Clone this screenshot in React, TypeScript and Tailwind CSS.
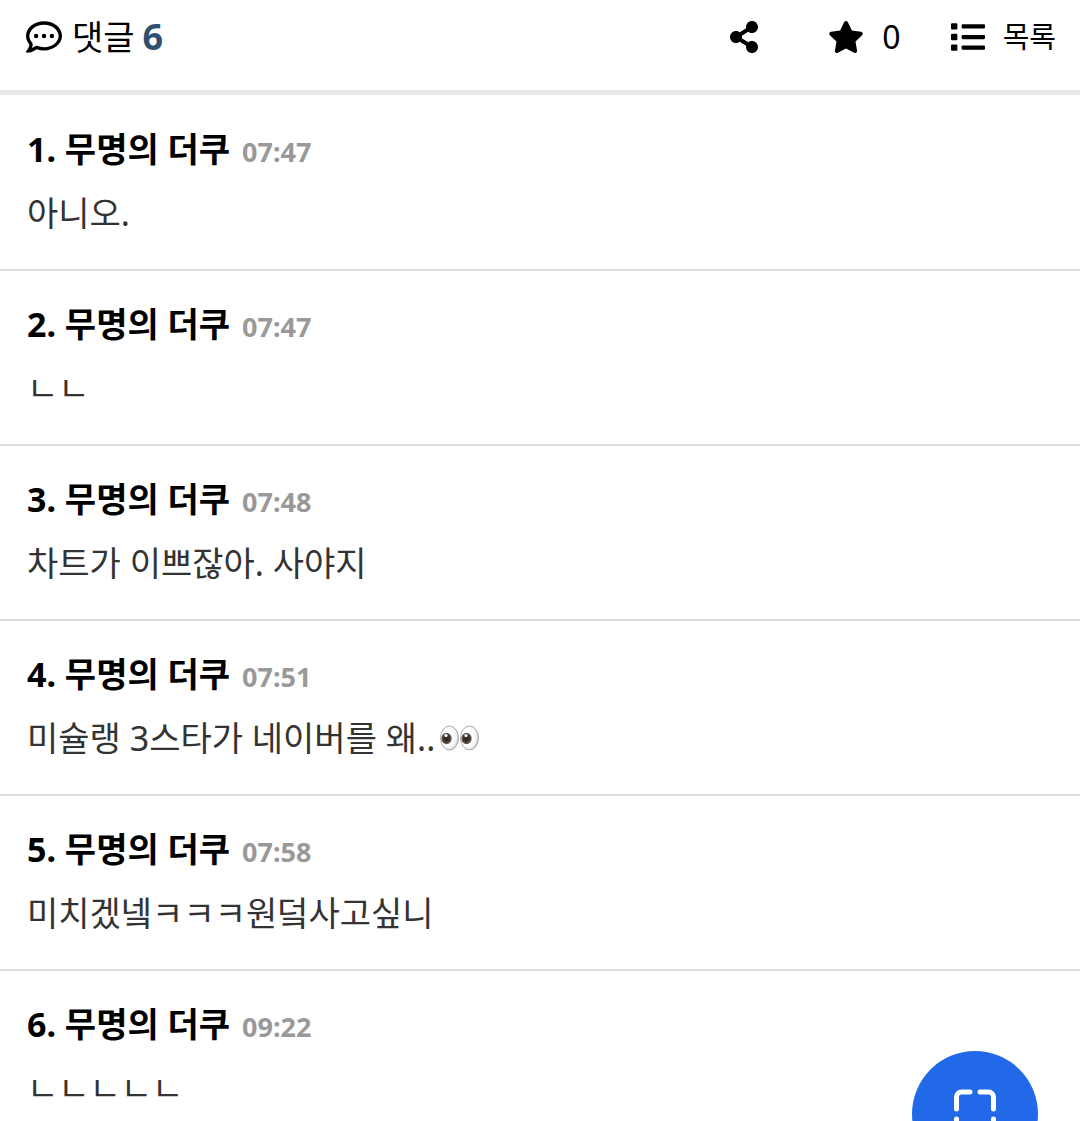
import { FaList, FaShareAlt, FaStar } from "react-icons/fa";
import { FaRegCommentDots } from "react-icons/fa6";

type Comment = {
  id: number;
  time: string;
  text: string;
  eyes?: boolean;
};

const AUTHOR = "무명의 더쿠";

const COMMENTS: Comment[] = [
  { id: 1, time: "07:47", text: "아니오." },
  { id: 2, time: "07:47", text: "ㄴㄴ" },
  { id: 3, time: "07:48", text: "차트가 이쁘잖아. 사야지" },
  { id: 4, time: "07:51", text: "미슐랭 3스타가 네이버를 왜..", eyes: true },
  { id: 5, time: "07:58", text: "미치겠넼ㅋㅋㅋ원덬사고싶니" },
  { id: 6, time: "09:22", text: "ㄴㄴㄴㄴㄴ" },
];

export default function App() {
  return (
    <div className="min-h-screen overflow-hidden bg-white text-black font-['Noto_Sans','Noto_Sans_CJK_KR',sans-serif]">
      <header className="flex items-start justify-between border-b-[5px] border-[#e8e8e8] pt-3 pr-6 pb-7 pl-[26px]">
        <h2 className="flex h-[50px] items-center text-[34px] leading-[50px]">
          <FaRegCommentDots className="mr-2.5 size-9" />
          댓글
          <strong className="ml-2 text-[36px] text-[#2f4f6f]">6</strong>
        </h2>
        <div className="flex h-[50px] items-center leading-[50px]">
          <button type="button" aria-label="공유" className="mr-[70px]">
            <FaShareAlt className="h-8 w-7" />
          </button>
          <button type="button" className="mr-[50px] flex items-center gap-[18px] text-[32px]">
            <FaStar className="h-8 w-9" />
            0
          </button>
          <a href="#list" className="flex items-center gap-[18px] text-[29px]">
            <FaList className="size-[34px]" />
            목록
          </a>
        </div>
      </header>

      <ul className="pt-px">
        {COMMENTS.map((c) => (
          <CommentRow key={c.id} comment={c} />
        ))}
      </ul>

      <button
        type="button"
        aria-label="화면 캡처"
        className="fixed -bottom-14 right-[42px] grid size-[126px] place-items-center rounded-full bg-[#2169e8] text-white"
      >
        <CaptureIcon />
      </button>
    </div>
  );
}

function CommentRow({ comment }: { comment: Comment }) {
  return (
    <li className="border-b-2 border-[#dddddd] px-[27px] pt-7 pb-[31px]">
      <div className="flex items-baseline gap-3 font-bold">
        <span className="text-[34px] leading-[50px]">
          {comment.id}. {AUTHOR}
        </span>
        <time className="text-[27px] leading-[50px] text-[#999999]">{comment.time}</time>
      </div>
      <p className="mt-[11px] flex items-center text-[34px] leading-[50px] text-[#333333]">
        {comment.text}
        {comment.eyes && <EyesIcon />}
      </p>
    </li>
  );
}

function EyesIcon() {
  return (
    <svg role="img" aria-label="눈" viewBox="0 0 40 26" className="ml-1 h-[26px] w-10">
      <defs>
        <radialGradient id="eye-white" cx="0.4" cy="0.45" r="0.6">
          <stop offset="0.55" stopColor="#ffffff" />
          <stop offset="0.85" stopColor="#ececec" />
          <stop offset="1" stopColor="#bdbdbd" />
        </radialGradient>
        <radialGradient id="eye-iris" cx="0.5" cy="0.5" r="0.5">
          <stop offset="0" stopColor="#2c211c" />
          <stop offset="0.6" stopColor="#41342e" />
          <stop offset="1" stopColor="#75665e" />
        </radialGradient>
      </defs>
      {[10.5, 30.5].map((x) => (
        <g key={x}>
          <ellipse cx={x} cy="13" rx="9" ry="12" fill="url(#eye-white)" stroke="#999999" strokeWidth="0.8" />
          <ellipse cx={x - 3} cy="13.5" rx="5.2" ry="5.8" fill="url(#eye-iris)" />
          <circle cx={x - 3.5} cy="10.5" r="1.6" fill="#ffffff" />
        </g>
      ))}
    </svg>
  );
}

function CaptureIcon() {
  return (
    <svg viewBox="0 0 42 50" className="h-[50px] w-[42px]" fill="none" stroke="currentColor" strokeWidth="5" strokeLinecap="round">
      <path d="M16 3H7.5A5 5 0 0 0 2.5 8V20" />
      <path d="M26 3H34.5A5 5 0 0 1 39.5 8V20" />
      <path d="M16 47H7.5A5 5 0 0 1 2.5 42V30" />
      <path d="M26 47H34.5A5 5 0 0 0 39.5 42V30" />
    </svg>
  );
}
